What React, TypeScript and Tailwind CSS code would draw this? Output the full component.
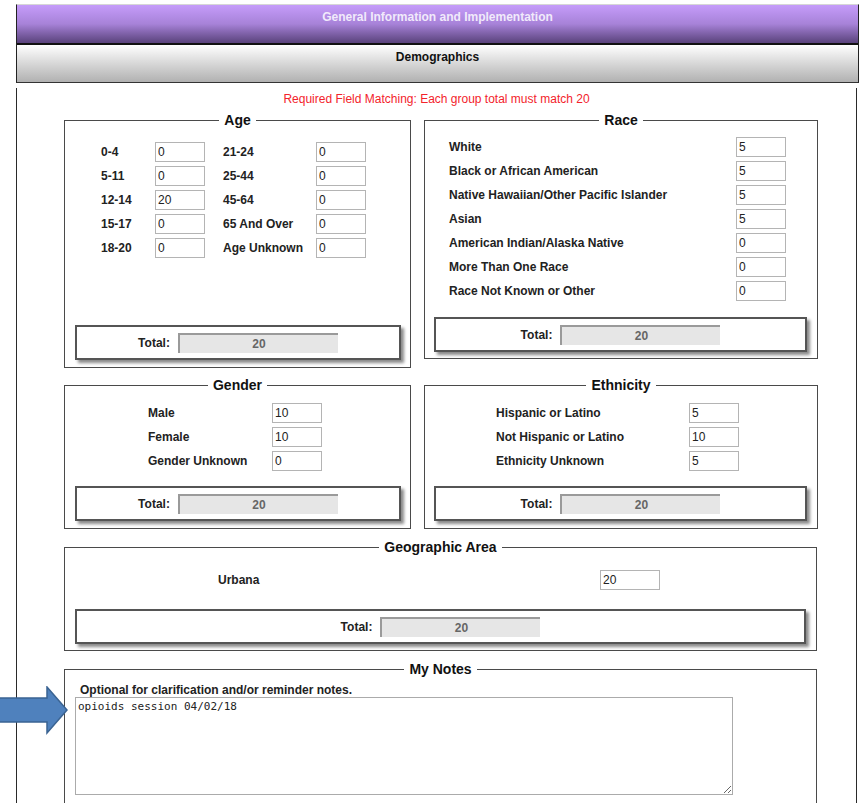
import React from 'react'

const font = { fontFamily: '"Liberation Sans", Arial, sans-serif' }

const ageLeft = [
  { label: '0-4', value: '0' },
  { label: '5-11', value: '0' },
  { label: '12-14', value: '20' },
  { label: '15-17', value: '0' },
  { label: '18-20', value: '0' },
]

const ageRight = [
  { label: '21-24', value: '0' },
  { label: '25-44', value: '0' },
  { label: '45-64', value: '0' },
  { label: '65 And Over', value: '0' },
  { label: 'Age Unknown', value: '0' },
]

const race = [
  { label: 'White', value: '5' },
  { label: 'Black or African American', value: '5' },
  { label: 'Native Hawaiian/Other Pacific Islander', value: '5' },
  { label: 'Asian', value: '5' },
  { label: 'American Indian/Alaska Native', value: '0' },
  { label: 'More Than One Race', value: '0' },
  { label: 'Race Not Known or Other', value: '0' },
]

const gender = [
  { label: 'Male', value: '10' },
  { label: 'Female', value: '10' },
  { label: 'Gender Unknown', value: '0' },
]

const ethnicity = [
  { label: 'Hispanic or Latino', value: '5' },
  { label: 'Not Hispanic or Latino', value: '10' },
  { label: 'Ethnicity Unknown', value: '5' },
]

function NumInput({ value, width = 'w-[50px]' }: { value: string; width?: string }) {
  return (
    <input
      type="text"
      defaultValue={value}
      className={`${width} h-[20px] border border-[#b4b4b4] bg-white px-[2px] text-[12px] text-[#222] outline-none`}
      style={font}
    />
  )
}

function TotalBox({ width, value = '20' }: { width: string; value?: string }) {
  return (
    <div
      className={`${width} ml-[10px] flex h-[35px] items-center justify-center gap-[8px] border-2 border-[#555] bg-white shadow-[3px_3px_3px_#8a8a8a]`}
    >
      <span className="text-[12px] font-bold text-[#222]">Total:</span>
      <input
        type="text"
        readOnly
        defaultValue={value}
        className="h-[20px] w-[160px] border-t-2 border-l-2 border-[#9a9a9a] bg-[#e6e6e6] text-center text-[12px] font-bold text-[#666] outline-none"
        style={font}
      />
    </div>
  )
}

function Group({
  title,
  className,
  children,
}: {
  title: string
  className: string
  children: React.ReactNode
}) {
  return (
    <fieldset className={`border border-[#4a4a4a] ${className}`}>
      <legend className="mx-auto px-[5px] text-[14px] font-bold leading-[16px] text-[#111]">{title}</legend>
      {children}
    </fieldset>
  )
}

function Row({ label, value, labelWidth }: { label: string; value: string; labelWidth: string }) {
  return (
    <div className="flex h-[20px] items-center">
      <span className={`${labelWidth} text-[12px] font-bold text-[#222]`}>{label}</span>
      <NumInput value={value} />
    </div>
  )
}

export default function App() {
  return (
    <div className="relative min-h-[803px] w-[862px] bg-white pt-[4px]" style={font}>
      {/* Section header bars */}
      <div className="ml-[16px] w-[843px] border-x border-t border-b border-x-[#222] border-t-[#d6d6d6] border-b-[#333]">
        <div className="h-[40px] border-b-2 border-[#111] bg-linear-to-b from-[#c59cfa] via-[#a782d8] to-[#5a437c] pt-[5px] text-center text-[12px] font-bold leading-[14px] text-[#f1eafb]">
          General Information and Implementation
        </div>
        <div className="h-[37px] bg-linear-to-b from-[#ffffff] to-[#b1b1b1] pt-[5px] text-center text-[12px] font-bold leading-[14px] text-[#111]">
          Demographics
        </div>
      </div>

      {/* Form body */}
      <div className="mt-[5px] ml-[16px] w-[841px] border-x border-[#2a2a2a] pb-[40px]">
        <p className="pt-[4px] text-center text-[12px] leading-[14px] text-[#f3232b]">
          Required Field Matching: Each group total must match 20
        </p>

        <div className="pl-[47px]">
          <div className="mt-[6px] flex items-start gap-[13px]">
            <Group title="Age" className="w-[347px] pb-[7px]">
              <div className="mt-[14px] flex pl-[36px]">
                <div className="flex flex-col gap-[4px]">
                  {ageLeft.map((r) => (
                    <Row key={r.label} label={r.label} value={r.value} labelWidth="w-[54px]" />
                  ))}
                </div>
                <div className="ml-[18px] flex flex-col gap-[4px]">
                  {ageRight.map((r) => (
                    <Row key={r.label} label={r.label} value={r.value} labelWidth="w-[93px]" />
                  ))}
                </div>
              </div>
              <div className="mt-[67px]">
                <TotalBox width="w-[326px]" />
              </div>
            </Group>

            <Group title="Race" className="w-[394px] pb-[6px]">
              <div className="mt-[9px] flex flex-col gap-[4px] pl-[24px]">
                {race.map((r) => (
                  <Row key={r.label} label={r.label} value={r.value} labelWidth="w-[287px]" />
                ))}
              </div>
              <div className="mt-[16px] -ml-[1px]">
                <TotalBox width="w-[373px]" />
              </div>
            </Group>
          </div>

          <div className="mt-[9px] flex items-start gap-[13px]">
            <Group title="Gender" className="w-[347px] pb-[7px]">
              <div className="mt-[10px] flex flex-col gap-[4px] pl-[83px]">
                {gender.map((r) => (
                  <Row key={r.label} label={r.label} value={r.value} labelWidth="w-[124px]" />
                ))}
              </div>
              <div className="mt-[15px]">
                <TotalBox width="w-[326px]" />
              </div>
            </Group>

            <Group title="Ethnicity" className="w-[394px] pb-[7px]">
              <div className="mt-[10px] flex flex-col gap-[4px] pl-[71px]">
                {ethnicity.map((r) => (
                  <Row key={r.label} label={r.label} value={r.value} labelWidth="w-[193px]" />
                ))}
              </div>
              <div className="mt-[15px] -ml-[1px]">
                <TotalBox width="w-[373px]" />
              </div>
            </Group>
          </div>

          <Group title="Geographic Area" className="mt-[10px] w-[753px] pb-[6px]">
            <div className="mt-[15px] flex h-[20px] items-center pl-[153px]">
              <span className="w-[382px] text-[12px] font-bold text-[#222]">Urbana</span>
              <NumInput value="20" width="w-[60px]" />
            </div>
            <div className="mt-[19px]">
              <TotalBox width="w-[731px]" />
            </div>
          </Group>

          <Group title="My Notes" className="mt-[10px] w-[753px] pb-[10px]">
            <p className="mt-[6px] pl-[15px] text-[12px] font-bold leading-[14px] text-[#222]">
              Optional for clarification and/or reminder notes.
            </p>
            <textarea
              defaultValue="opioids session 04/02/18"
              className="ml-[10px] block h-[98px] w-[658px] border border-[#ababab] p-[2px] text-[11px] leading-[14px] text-[#222] outline-none"
              style={{ fontFamily: '"DejaVu Sans Mono", "Liberation Mono", monospace' }}
            />
          </Group>
        </div>
      </div>

      {/* Callout arrow pointing at the notes field */}
      <svg className="absolute left-0 top-[686px]" width="70" height="50" viewBox="0 0 70 50">
        <polygon
          points="-2,12 47,12 47,1 67,24 47,47 47,36 -2,36"
          fill="#4f81bd"
          stroke="#3a6392"
          strokeWidth="1.5"
        />
      </svg>
    </div>
  )
}
